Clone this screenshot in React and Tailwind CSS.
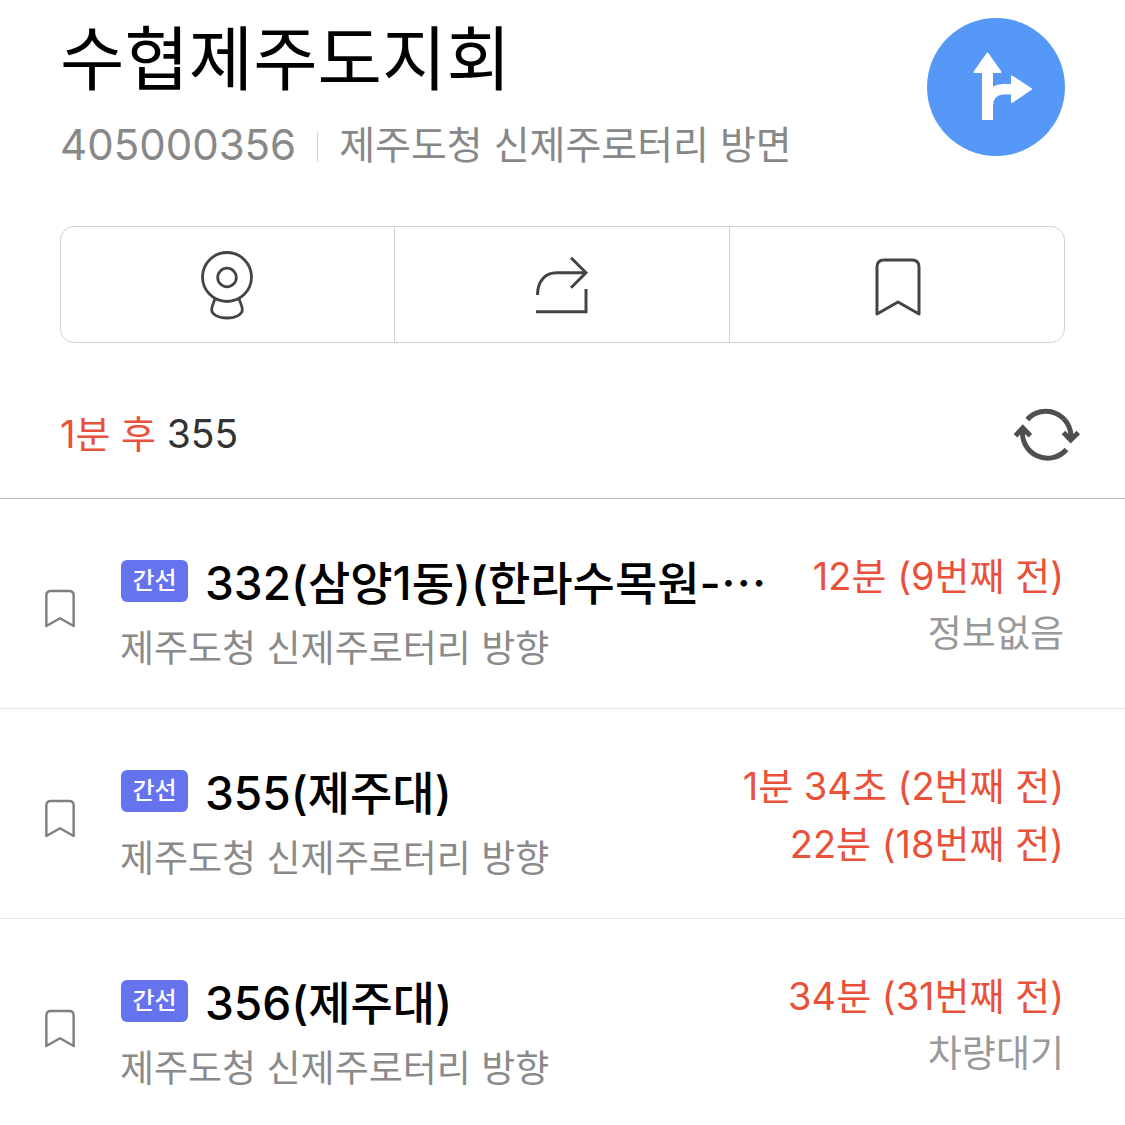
import React from 'react';
import clsx from 'clsx';

const routes = [
    {
        id: 1,
        type: '간선',
        name: '332(삼양1동)(한라수목원-⋯',
        direction: '제주도청 신제주로터리 방향',
        arrivals: [
            { text: '12분 (9번째 전)', live: true },
            { text: '정보없음', live: false },
        ],
    },
    {
        id: 2,
        type: '간선',
        name: '355(제주대)',
        direction: '제주도청 신제주로터리 방향',
        arrivals: [
            { text: '1분 34초 (2번째 전)', live: true },
            { text: '22분 (18번째 전)', live: true },
        ],
    },
    {
        id: 3,
        type: '간선',
        name: '356(제주대)',
        direction: '제주도청 신제주로터리 방향',
        arrivals: [
            { text: '34분 (31번째 전)', live: true },
            { text: '차량대기', live: false },
        ],
    },
];

function DirectionIcon() {
    return (
        <svg viewBox="0 0 138 138" className="size-full" aria-hidden="true">
            <g fill="#fff" stroke="#fff" strokeLinejoin="round" strokeWidth="2">
                <path d="M60.5 35.500 L73.500 54 H47.500 Z" />
                <path d="M85 58.500 L104 71 L85 84 Z" />
            </g>
            <path fill="#fff" d="M55 50 H66 V68.500 Q70 66 76 66 H86 V76.500 H76 Q66 77.500 66 88 V102 H55 Z" />
        </svg>
    );
}

function WebcamIcon() {
    return (
        <svg width="56" height="72" viewBox="0 0 56 72" fill="none" stroke="#444" strokeWidth="2.800" aria-hidden="true">
            <circle cx="27" cy="28" r="24.500" />
            <circle cx="27" cy="28.500" r="9.300" />
            <path d="M15 50 C13.500 54 11.700 57 11.700 60.500 C11.700 65.500 18 69 27 69 C36 69 42.300 65.500 42.300 60.500 C42.300 57 40.500 54 39 50" />
        </svg>
    );
}

function ShareIcon() {
    return (
        <svg width="56" height="72" viewBox="0 0 56 72" fill="none" stroke="#444" strokeWidth="3" aria-hidden="true">
            <path d="M3.500 46 C3.500 32 11 23.800 23 23.800 H51.500" />
            <path d="M37 8.800 L52 23.800 L37 38.800" />
            <path d="M2 62.800 H52 V40" />
        </svg>
    );
}

function BookmarkIcon({ className, strokeWidth }) {
    return (
        <svg
            viewBox="0 0 48 60"
            className={className}
            fill="none"
            stroke="currentColor"
            strokeWidth={strokeWidth}
            strokeLinejoin="round"
            aria-hidden="true"
        >
            <path d="M3 57 V10 Q3 3 10 3 H38 Q45 3 45 10 V57 L24 45 Z" />
        </svg>
    );
}

function RefreshIcon() {
    return (
        <svg width="66" height="60" viewBox="0 0 66 60" fill="none" stroke="#4d4f52" strokeWidth="5" aria-hidden="true">
            <path d="M13.300 14.500 A25 25 0 0 1 56.700 34" />
            <path d="M49.500 27.500 L56.700 35 L64.300 27.500" />
            <path d="M52.500 44.500 A25 25 0 0 1 8.900 24" />
            <path d="M1.500 30.800 L8.800 23 L16.300 30.800" />
        </svg>
    );
}

function RouteRow({ route }) {
    return (
        <li className="flex h-[210px] border-b border-[#e2e2e2] pr-[61px] pt-12">
            <button type="button" aria-label="즐겨찾기" className="flex h-[122px] w-[120px] shrink-0 items-center justify-center">
                <BookmarkIcon className="h-[39px] w-8 text-[#808080]" strokeWidth="3.800" />
            </button>
            <div className="min-w-0 flex-1 pt-1">
                <div className="flex h-[60px] items-center">
                    <span className="ml-px mr-[17px] flex h-[42px] w-[67px] shrink-0 items-center justify-center rounded-md bg-[#6673ef] text-2xl font-medium text-white">
                        {route.type}
                    </span>
                    <h2 className="whitespace-nowrap pt-1 text-[46px] leading-[60px] font-medium text-black">{route.name}</h2>
                </div>
                <p className="whitespace-nowrap text-[37px] leading-[76px] text-[#8a8a8a]">{route.direction}</p>
            </div>
            <div className="shrink-0 text-right leading-[58px]">
                {route.arrivals.map((arrival) => (
                    <p
                        key={arrival.text}
                        className={clsx(arrival.live ? 'text-[38px] text-[#e9513a]' : 'text-[37px] text-[#999]')}
                    >
                        {arrival.text}
                    </p>
                ))}
            </div>
        </li>
    );
}

export default function App() {
    return (
        <main lang="ko" className="min-h-screen bg-white font-['Inter','Noto_Sans_CJK_KR',sans-serif]">
            {/* Stop header */}
            <header className="flex items-start justify-between px-[60px] pt-[18px]">
                <div>
                    <h1 className="text-[70px] leading-[84px] text-black">수협제주도지회</h1>
                    <div className="flex items-center pt-3.5 leading-[58px] text-[#888]">
                        <span className="text-[42px]">405000356</span>
                        <span className="mx-[21px] mt-1 h-[30px] w-px bg-[#d5d5d5]" />
                        <span className="text-[39px]">제주도청 신제주로터리 방면</span>
                    </div>
                </div>
                <button type="button" aria-label="길찾기" className="size-[138px] shrink-0 rounded-full bg-[#5598f8]">
                    <DirectionIcon />
                </button>
            </header>

            {/* Actions */}
            <div className="mx-[60px] mt-[52px] grid h-[117px] grid-cols-3 divide-x divide-[#d2d2d2] rounded-[14px] border border-[#d2d2d2]">
                <button type="button" aria-label="주변 보기" className="flex items-center justify-center">
                    <WebcamIcon />
                </button>
                <button type="button" aria-label="공유" className="flex items-center justify-center">
                    <ShareIcon />
                </button>
                <button type="button" aria-label="즐겨찾기" className="flex items-center justify-center pl-0.5 pt-1">
                    <BookmarkIcon className="h-[60px] w-12 text-[#444]" strokeWidth="3" />
                </button>
            </div>

            {/* Arriving soon */}
            <div className="flex h-[156px] items-center justify-between border-b border-[#bdbdbd] pl-[60px] pr-[45px] pt-7">
                <p className="text-[38px] text-[#333]">
                    <span className="text-[#e9513a]">1분 후</span> <span className="text-[39px]">355</span>
                </p>
                <button type="button" aria-label="새로고침">
                    <RefreshIcon />
                </button>
            </div>

            {/* Routes */}
            <ul>
                {routes.map((route) => (
                    <RouteRow key={route.id} route={route} />
                ))}
            </ul>
        </main>
    );
}
